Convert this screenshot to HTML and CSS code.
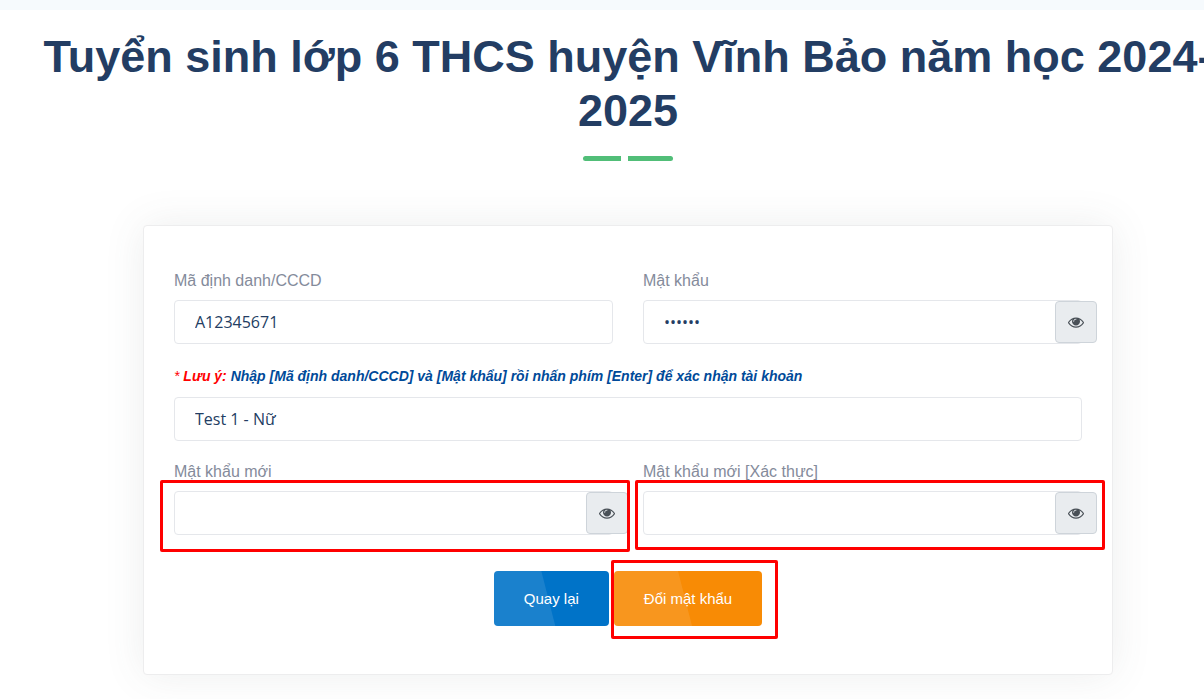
FILE: index.html
```html
<!DOCTYPE html>
<html lang="vi">
<head>
<meta charset="utf-8">
<title>Đổi mật khẩu</title>
<link rel="stylesheet" href="styles.css">
</head>
<body>
<svg class="sprite" aria-hidden="true">
  <symbol id="eye" viewBox="0 0 1792 1792">
    <path d="M1664 960q-152-236-381-353 61 104 61 225 0 185-131.500 316.500t-316.500 131.500-316.500-131.500-131.500-316.500q0-121 61-225-229 117-381 353 133 205 333.500 326.500t434.500 121.500 434.500-121.500 333.500-326.500zm-720-384q0-20-14-34t-34-14q-125 0-214.500 89.500t-89.500 214.500q0 20 14 34t34 14 34-14 14-34q0-86 61-147t147-61q20 0 34-14t14-34zm848 384q0 34-20 69-140 230-376.500 368.500t-499.500 138.500-499.500-139-376.500-368q-20-35-20-69t20-69q140-229 376.500-368t499.500-139 499.500 139 376.500 368q20 35 20 69z"/>
  </symbol>
</svg>
<div class="page">
  <div class="top-strip"></div>
  <main class="section">
    <h2 class="title">Tuyển sinh lớp 6 THCS huyện Vĩnh Bảo năm học 2024-2025</h2>
    <div class="divider"><span class="divider-short"></span><span class="divider-long"></span></div>
    <form class="card">
      <div class="row">
        <div class="field">
          <label class="label" for="account">Mã định danh/CCCD</label>
          <input class="input" id="account" type="text" value="A12345671">
        </div>
        <div class="field">
          <label class="label" for="password">Mật khẩu</label>
          <div class="secret">
            <input class="input" id="password" type="password" value="123456">
            <button class="toggle" type="button" aria-label="Hiện mật khẩu"><svg class="eye"><use href="#eye"/></svg></button>
          </div>
        </div>
      </div>
      <p class="note"><span class="note-mark">* <b>Lưu ý:</b></span> <b>Nhập [Mã định danh/CCCD] và [Mật khẩu] rồi nhấn phím [Enter] để xác nhận tài khoản</b></p>
      <input class="input" type="text" aria-label="Họ tên" value="Test 1 - Nữ">
      <div class="row row-new">
        <div class="field">
          <label class="label" for="new-password">Mật khẩu mới</label>
          <div class="secret">
            <input class="input" id="new-password" type="password">
            <button class="toggle" type="button" aria-label="Hiện mật khẩu mới"><svg class="eye"><use href="#eye"/></svg></button>
            <span class="mark mark-new"></span>
          </div>
        </div>
        <div class="field">
          <label class="label" for="confirm-password">Mật khẩu mới [Xác thực]</label>
          <div class="secret">
            <input class="input" id="confirm-password" type="password">
            <button class="toggle" type="button" aria-label="Hiện mật khẩu xác thực"><svg class="eye"><use href="#eye"/></svg></button>
            <span class="mark mark-confirm"></span>
          </div>
        </div>
      </div>
      <div class="actions">
        <button class="btn btn-back" type="button"><span class="btn-text">Quay lại</span></button>
        <div class="submit">
          <button class="btn btn-submit" type="submit"><span class="btn-text">Đổi mật khẩu</span></button>
          <span class="mark mark-submit"></span>
        </div>
      </div>
    </form>
  </main>
</div>
</body>
</html>
```

FILE: styles.css
```css
* {
  box-sizing: border-box;
}

body {
  margin: 0;
  overflow: hidden;
  background: #fff;
  color: #848b9b;
  font-family: "Liberation Sans", Arial, sans-serif;
  font-size: 16px;
  line-height: 24px;
}

.sprite {
  position: absolute;
  width: 0;
  height: 0;
}

.page {
  width: calc(100% + 52px);
}

.top-strip {
  height: 10px;
  background: #f6fafd;
}

.section {
  padding: 20px 15px 40px;
}

.title {
  margin: 0;
  color: #233d63;
  font-size: 45px;
  line-height: 54px;
  text-align: center;
}

.divider {
  display: flex;
  justify-content: center;
  gap: 7px;
  margin: 18px 0 64px;
}

.divider span {
  height: 5px;
  background: #51be78;
}

.divider-short {
  width: 38px;
  border-radius: 5px 0 0 5px;
}

.divider-long {
  width: 45px;
  border-radius: 0 5px 5px 0;
}

.card {
  max-width: 970px;
  margin: 0 auto;
  padding: 43px 30px 48px;
  border: 1px solid #ededee;
  border-radius: 4px;
  background: #fff;
  box-shadow: 0 0 40px rgba(82, 85, 90, 0.1);
}

.row {
  display: grid;
  grid-template-columns: 1fr 1fr;
  gap: 30px;
}

.row-new {
  margin-top: 19px;
}

.label {
  display: block;
  margin-bottom: 7px;
}

.input {
  display: block;
  width: 100%;
  height: 44px;
  padding: 0 20px;
  border: 1px solid #e5e7eb;
  border-radius: 4px;
  background: #fff;
  color: #233d63;
  font-family: "Open Sans", sans-serif;
  font-size: 16px;
}

.secret {
  position: relative;
}

.toggle {
  position: absolute;
  top: 1px;
  right: -15px;
  display: flex;
  align-items: center;
  justify-content: center;
  width: 42px;
  height: 42px;
  padding: 0;
  border: 1px solid #ced4da;
  border-radius: 4px;
  background: #e9ecef;
  color: #495057;
}

.eye {
  width: 16px;
  height: 16px;
  fill: currentColor;
}

.note {
  margin: 22px 0 10px;
  color: #004a99;
  font-size: 14px;
  font-style: italic;
  line-height: 21px;
}

.note-mark {
  color: #f00;
}

.actions {
  display: flex;
  justify-content: center;
  gap: 5px;
  margin-top: 36px;
}

.btn {
  position: relative;
  overflow: hidden;
  height: 55px;
  padding: 0 30px;
  border: 0;
  border-radius: 4px;
  color: #fff;
  font-family: inherit;
  font-size: 15px;
}

.btn::before {
  content: "";
  position: absolute;
  inset: 0;
  background: rgba(255, 255, 255, 0.1);
  clip-path: polygon(0 0, calc(50% - 10px) 0, calc(50% + 4px) 100%, 0 100%);
}

.btn-text {
  position: relative;
}

.btn-back {
  background: #0073c8;
}

.btn-submit {
  background: #f88b05;
}

.submit {
  position: relative;
}

.mark {
  position: absolute;
  border: 3px solid #f00;
  border-radius: 2px;
  pointer-events: none;
}

.mark-new {
  inset: -11px -17px -17px -14px;
}

.mark-confirm {
  inset: -11px -23px -15px -8px;
}

.mark-submit {
  inset: -11px -16px -13px -3px;
}
```
